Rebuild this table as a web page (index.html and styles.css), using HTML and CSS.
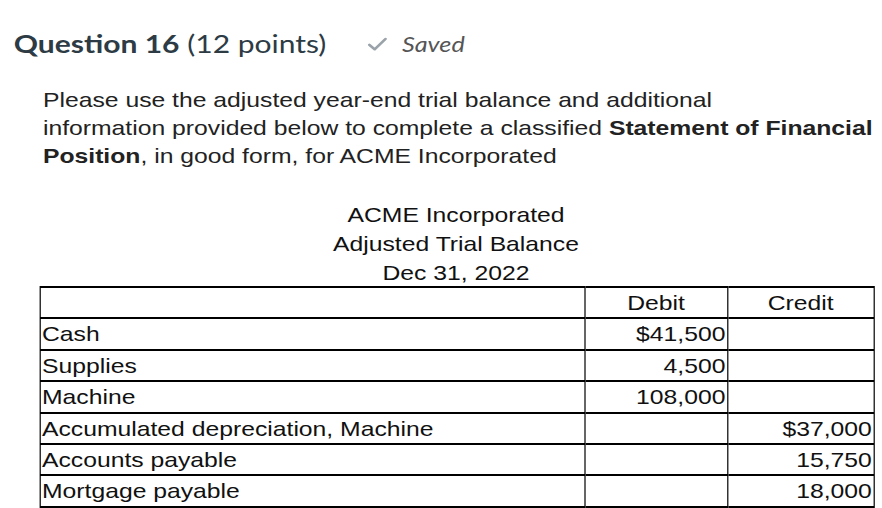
FILE: index.html
```html
<!DOCTYPE html>
<html>
<head>
<meta charset="utf-8">
<link rel="stylesheet" href="styles.css">
</head>
<body>
<div class="page">
  <header class="q-header">
    <h2 class="q-title"><span class="q-num">Question 16</span> <span class="q-pts">(12 points)</span></h2>
    <span class="saved">
      <svg class="check" width="17" height="16" viewBox="0 0 17 16"><path d="M1.8 8.8 L6.3 13.3 L15.2 3" fill="none" stroke="#9aa3a9" stroke-width="2.4" stroke-linecap="round" stroke-linejoin="round"/></svg>
      <span class="saved-text">Saved</span>
    </span>
  </header>
  <div class="q-body">
    <p class="intro">Please use the adjusted year-end trial balance and additional<br>information provided below to complete a classified <b>Statement of Financial Position</b>, in good form, for ACME Incorporated</p>
    <div class="tb-head">
      <div>ACME Incorporated</div>
      <div>Adjusted Trial Balance</div>
      <div>Dec 31, 2022</div>
    </div>
    <table class="tb">
      <colgroup><col class="c1"><col class="c2"><col class="c3"></colgroup>
      <tr class="hdr"><td></td><td class="ctr">Debit</td><td class="ctr">Credit</td></tr>
      <tr><td>Cash</td><td class="num">$41,500</td><td></td></tr>
      <tr><td>Supplies</td><td class="num">4,500</td><td></td></tr>
      <tr><td>Machine</td><td class="num">108,000</td><td></td></tr>
      <tr><td>Accumulated depreciation, Machine</td><td></td><td class="num">$37,000</td></tr>
      <tr><td>Accounts payable</td><td></td><td class="num">15,750</td></tr>
      <tr><td>Mortgage payable</td><td></td><td class="num">18,000</td></tr>
    </table>
  </div>
</div>
</body>
</html>
```
FILE: styles.css
```css
html, body { margin: 0; padding: 0; background: #fff; overflow: hidden; }
body { font-family: "Liberation Sans", Arial, sans-serif; color: #222; }
/* the reference capture is stretched horizontally by ~1.2 */
.page {
  width: 735px;
  transform: scaleX(1.2);
  transform-origin: 0 0;
}
.q-header {
  display: flex;
  align-items: center;
  padding: 25px 0 0 11.5px;
  height: 36px;
}
.q-title {
  margin: 0;
  font-family: Lato, sans-serif;
  font-size: 25px;
  line-height: 36px;
  color: #2d3b45;
  font-weight: 400;
}
.q-num { font-weight: 700; }
.saved {
  display: flex;
  align-items: center;
  margin-left: 34px;
  color: #555;
  font-family: Lato, sans-serif;
  font-style: italic;
  font-size: 21px;
}
.check { margin-right: 12px; margin-top: 1px; }
.q-body { padding: 25px 0 0 32.5px; width: 695px; }
.intro {
  margin: 0 0 0 3.3px;
  width: 700px;
  font-size: 20.6px;
  line-height: 28px;
  color: #222;
}
.tb-head {
  margin-top: 30px;
  text-align: center;
  font-size: 20.6px;
  line-height: 29px;
  color: #111;
}
.tb {
  margin-top: -1px;
  border-collapse: collapse;
  table-layout: fixed;
  width: 695px;
  font-size: 20.6px;
  color: #111;
}
.c1 { width: 454px; }
.c2 { width: 119px; }
.c3 { width: 122px; }
.tb td {
  border: 2px solid #000;
  border-left-width: 1.7px;
  border-right-width: 1.7px;
  padding: 0 1px 0 1.5px;
  height: 29.4px;
  line-height: 29.4px;
  vertical-align: bottom;
  white-space: nowrap;
}
.tb .ctr { text-align: center; }
.tb .num { text-align: right; }
```
